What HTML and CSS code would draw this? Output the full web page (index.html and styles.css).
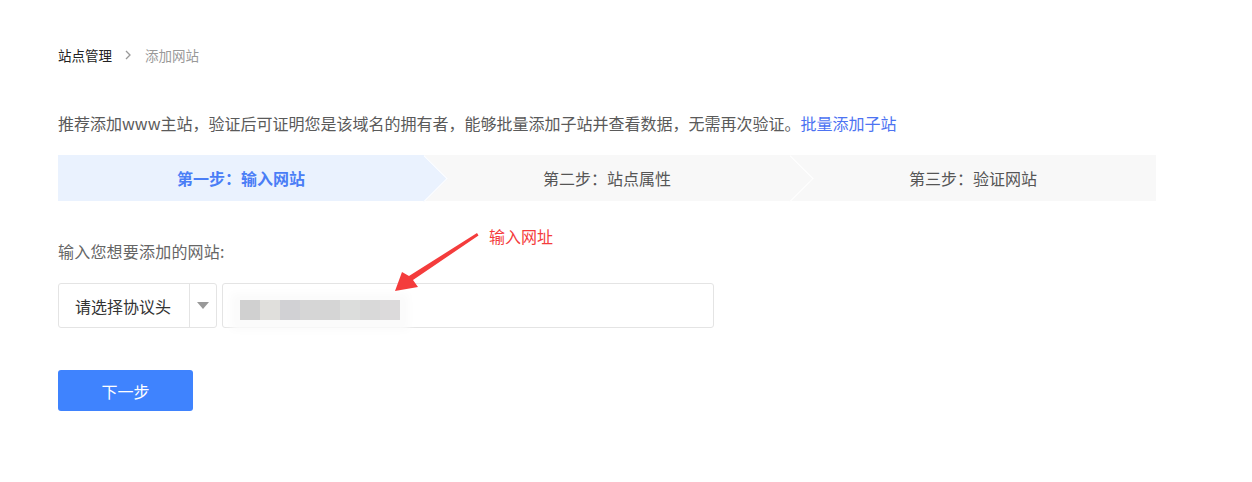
FILE: index.html
```html
<!DOCTYPE html>
<html lang="zh-CN">
<head>
  <meta charset="UTF-8" />
  <title>添加网站</title>
  <link rel="stylesheet" href="styles.css">
</head>
<body>
  <div class="page">
    <div class="crumbs">
      <span class="crumb">站点管理</span>
      <svg class="crumb-sep" width="8" height="10" viewBox="0 0 8 10"><polyline points="2,1 6,5 2,9" fill="none" stroke="#999" stroke-width="1.3"/></svg>
      <span class="crumb current">添加网站</span>
    </div>

    <p class="tip">推荐添加www主站，验证后可证明您是该域名的拥有者，能够批量添加子站并查看数据，无需再次验证。<a class="link">批量添加子站</a></p>

    <div class="steps">
      <div class="step active">第一步：输入网站</div>
      <div class="step">第二步：站点属性</div>
      <div class="step last">第三步：验证网站</div>
    </div>

    <div class="label">输入您想要添加的网站:</div>

    <div class="field-row">
      <div class="select">
        <span class="select-text">请选择协议头</span>
        <span class="select-arrow"><i></i></span>
      </div>
      <div class="url-input">
        <div class="blur">
          <span style="background:#d0d0d0"></span>
          <span style="background:#e0dfdc"></span>
          <span style="background:#d1d1d4"></span>
          <span style="background:#d6d6d6"></span>
          <span style="background:#d5d5d5"></span>
          <span style="background:#dcdddc"></span>
          <span style="background:#d9d9d9"></span>
          <span style="background:#dcdadb"></span>
        </div>
      </div>
    </div>

    <button class="btn">下一步</button>

    <!-- 标注 -->
    <div class="note">输入网址</div>
    <svg class="note-arrow" width="100" height="70" viewBox="380 225 100 70">
      <polygon points="477,233 478.5,235.5 413,280 418,287 395,291 402,272 409,276" fill="#f43c3c"/>
    </svg>
  </div>
</body>
</html>
```

FILE: styles.css
```css
body {
  margin: 0;
  background: #fff;
  font-family: "Microsoft YaHei", "Noto Sans CJK SC", sans-serif;
  color: #555;
}
.page {
  position: relative;
  padding: 45px 0 60px 58px;
}

/* 面包屑 */
.crumbs {
  display: flex;
  align-items: center;
  height: 20px;
  font-size: 13.5px;
}
.crumb {
  color: #222;
}
.crumb.current {
  color: #999;
}
.crumb-sep {
  margin: 0 13px 0 12px;
}

.tip {
  margin: 46px 0 0;
  font-size: 16px;
  line-height: 24px;
  color: #5a5a5a;
}
.link {
  color: #4d73f2;
  cursor: pointer;
}

/* 步骤条 */
.steps {
  display: flex;
  width: 1098px;
  height: 46px;
  margin-top: 20px;
  background: #f8f8f8;
}
.step {
  position: relative;
  flex: 1;
  display: flex;
  align-items: center;
  justify-content: center;
  font-size: 16px;
  color: #555;
  background: #f8f8f8;
}
.step::after {
  content: "";
  position: absolute;
  z-index: 1;
  top: 6.7px;
  right: -16.3px;
  width: 32.6px;
  height: 32.6px;
  box-sizing: border-box;
  background: inherit;
  border-top: 1.5px solid #fff;
  border-right: 1.5px solid #fff;
  transform: rotate(45deg);
}
.step.last::after {
  display: none;
}
.step.active {
  background: #eaf2fe;
  color: #4a7ef6;
  font-weight: bold;
}

.label {
  margin-top: 38px;
  font-size: 16px;
  line-height: 24px;
  color: #666;
  letter-spacing: 0.2px;
}

/* 输入行 */
.field-row {
  display: flex;
  margin-top: 20px;
}
.select {
  display: flex;
  width: 159px;
  height: 45px;
  box-sizing: border-box;
  border: 1px solid #e4e4e4;
  border-radius: 3px;
}
.select-text {
  flex: 1;
  display: flex;
  align-items: center;
  padding-left: 16px;
  font-size: 16px;
  color: #333;
}
.select-arrow {
  width: 26px;
  border-left: 1px solid #e4e4e4;
  display: flex;
  align-items: center;
  justify-content: center;
}
.select-arrow i {
  width: 0;
  height: 0;
  border-left: 6px solid transparent;
  border-right: 6px solid transparent;
  border-top: 7px solid #999;
}
.url-input {
  position: relative;
  width: 492px;
  height: 45px;
  margin-left: 5px;
  box-sizing: border-box;
  border: 1px solid #e4e4e4;
  border-radius: 3px;
}
.blur {
  position: absolute;
  left: 17px;
  top: 16px;
  display: flex;
  height: 20px;
  box-shadow: 0 2px 8px 9px #fbfbfb;
  background: #fbfbfb;
}
.blur span {
  width: 20px;
}

.btn {
  display: block;
  margin-top: 42px;
  width: 135px;
  height: 41px;
  border: none;
  border-radius: 3px;
  background: #3f83fe;
  color: #fff;
  font-family: inherit;
  font-size: 16px;
  cursor: pointer;
}

/* 红色标注 */
.note {
  position: absolute;
  left: 489px;
  top: 225px;
  font-size: 16px;
  line-height: 22px;
  color: #f43c3c;
}
.note-arrow {
  position: absolute;
  left: 380px;
  top: 225px;
}
```
